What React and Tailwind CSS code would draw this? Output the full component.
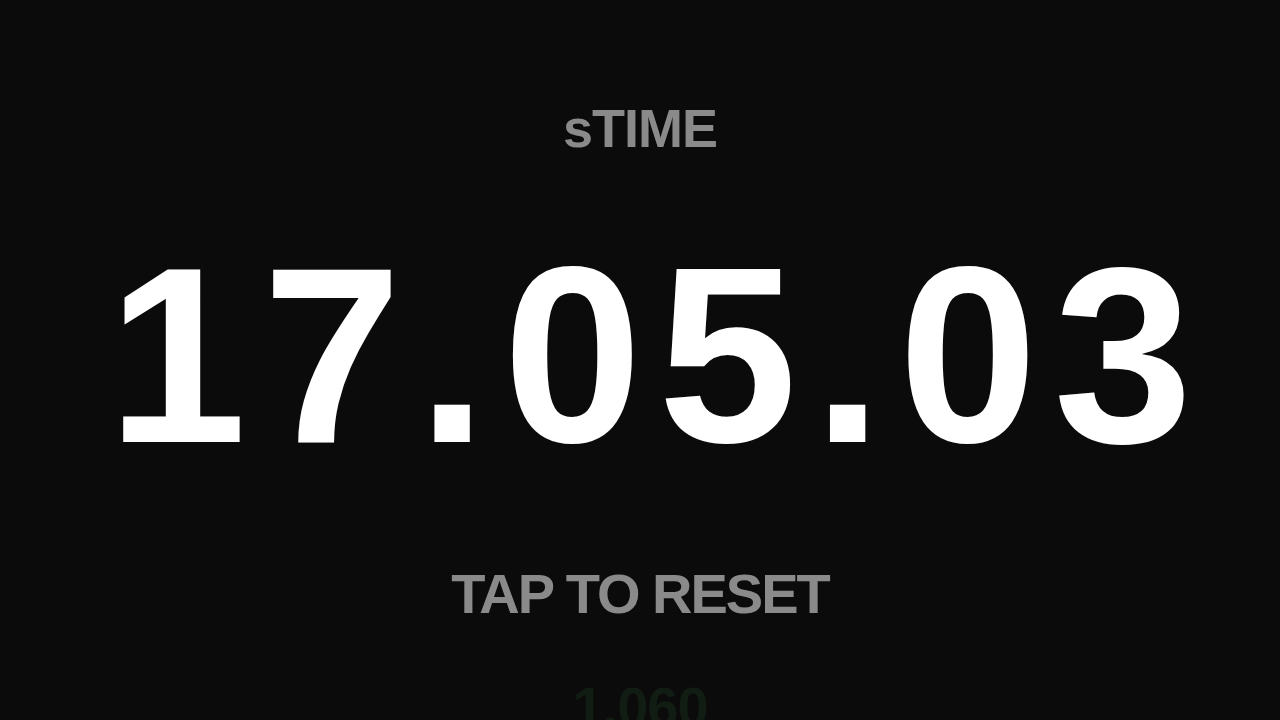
import React from "react";

const font = { fontFamily: '"Liberation Sans", Arial, sans-serif' };

export default function App() {
  return (
    <div
      className="w-[1280px] h-[720px] overflow-hidden bg-[#0b0b0b] flex flex-col items-center pt-[101px] select-none"
      style={font}
    >
      <div className="text-[54px] leading-none font-bold text-[#8a8a8a] tracking-[-1px] h-[56px]">
        sTIME
      </div>
      <div className="mt-[76px] text-[250px] leading-none font-bold text-white tracking-[16px] pl-[36px] h-[250px]">
        17.05.03
      </div>
      <div className="mt-[85px] text-[56px] leading-none font-bold text-[#8a8a8a] tracking-[-2px] h-[56px]">
        TAP TO RESET
      </div>
      <div className="mt-[57px] text-[56px] leading-none font-bold text-[#111c13] tracking-[-1px]">
        1.060
      </div>
    </div>
  );
}
